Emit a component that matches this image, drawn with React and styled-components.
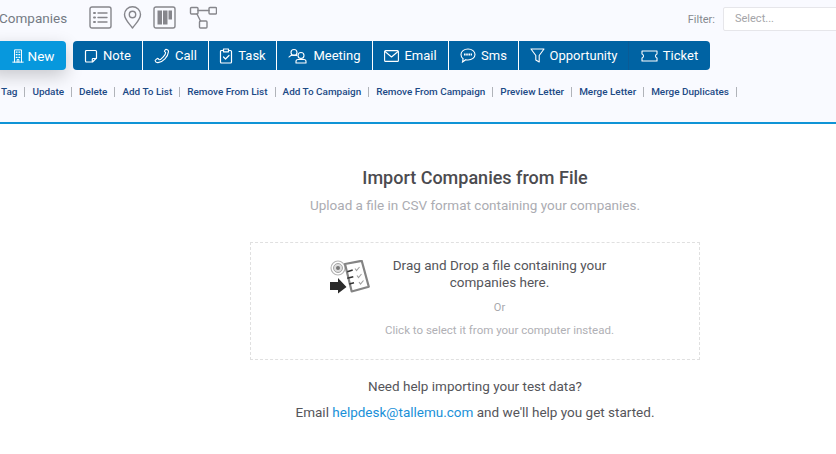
import React from "react";
import styled, { createGlobalStyle } from "styled-components";

const Global = createGlobalStyle`
  html, body { margin: 0; padding: 0; background: #fff; overflow: hidden; }
  body { font-family: Roboto, "Liberation Sans", sans-serif; }
  * { box-sizing: border-box; }
`;

const Header = styled.header`
  height: 124px;
  background: #f9faff;
  border-bottom: 2px solid #0f94d6;
  display: flex;
  flex-direction: column;
`;

const TopRow = styled.div`
  height: 41px;
  display: flex;
  align-items: flex-start;
`;

const PageTitle = styled.h1`
  margin: 10px 0 0 -1px;
  width: 90px;
  font-size: 13.5px;
  line-height: 17px;
  font-weight: 400;
  color: #757a84;
`;

const ViewIcons = styled.div`
  display: flex;
  align-items: flex-start;
  gap: 9px;
  padding-top: 6px;
  color: #86868c;
`;

const FilterBox = styled.div`
  margin-left: auto;
  display: flex;
  align-items: center;
  gap: 8px;
  padding-top: 7px;
  margin-right: -40px;
  font-size: 11px;
  color: #85898f;
`;

const SelectInput = styled.div`
  width: 153px;
  height: 24px;
  background: #fff;
  border: 1px solid #e6e6ea;
  border-radius: 2px;
  padding: 4px 11px;
  font-size: 11px;
  color: #a4a4a8;
`;

const ActionRow = styled.div`
  display: flex;
  height: 29px;
`;

const NewButton = styled.button`
  margin-left: -12px;
  width: 78px;
  height: 29px;
  border: 0;
  border-radius: 4px;
  background: #0798dd;
  color: #fff;
  font: 400 13.5px Roboto, sans-serif;
  display: flex;
  align-items: center;
  justify-content: center;
  padding: 0 0 0 11px;
  gap: 3px;
  box-shadow: 0 6px 18px rgba(0, 0, 0, 0.2);
`;

const ButtonGroup = styled.div`
  display: flex;
  margin-left: 7px;
  border-radius: 4px;
  overflow: hidden;
`;

const GroupButton = styled.button`
  width: ${(p) => p.$w}px;
  height: 29px;
  border: 0;
  border-right: 1px solid ${(p) => (p.$soft ? "#0a5b96" : "#fff")};
  background: #0063a3;
  color: #fff;
  font: 400 13px Roboto, sans-serif;
  display: flex;
  align-items: center;
  justify-content: center;
  gap: 5px;
  padding: 0;
  &:last-child { border-right: 0; }
`;

const LinkRow = styled.nav`
  display: flex;
  align-items: center;
  margin-top: 15px;
  padding-left: 1px;
  font-size: 9.95px;
  line-height: 14px;
  font-weight: 500;
  color: #1d4a86;
`;

const ActionLink = styled.span`
  white-space: nowrap;
`;

const Pipe = styled.span`
  width: 1px;
  height: 10px;
  margin: 0 7px;
  background: #b0b3b9;
`;

const Main = styled.main`
  width: 450px;
  margin-left: 250px;
  padding-top: 43px;
  text-align: center;
`;

const Title = styled.h2`
  margin: 0;
  font-size: 18px;
  line-height: 22px;
  font-weight: 500;
  color: #4b4b4f;
`;

const Subtitle = styled.p`
  margin: 6px 0 0;
  font-size: 13.5px;
  line-height: 20px;
  color: #abacb2;
`;

const DropZone = styled.div`
  margin-top: 27px;
  height: 118px;
  border: 1px dashed #e0e0e0;
  display: grid;
  grid-template-columns: 79px 40px 1fr;
  padding-top: 14px;
`;

const DropArt = styled.div`
  grid-column: 2;
  padding-top: 3px;
`;

const DropText = styled.div`
  grid-column: 3;
  padding-right: 82px;
  padding-left: 12px;
`;

const DropLead = styled.p`
  margin: 0;
  font-size: 13.5px;
  line-height: 17px;
  color: #55555a;
`;

const DropOr = styled.p`
  margin: 10px 0 0;
  font-size: 11px;
  line-height: 14px;
  color: #a8a8ad;
`;

const DropHint = styled.p`
  margin: 8px 0 0;
  font-size: 11.5px;
  line-height: 14px;
  color: #b0b0b5;
`;

const Help = styled.p`
  margin: ${(p) => p.$top}px 0 0;
  font-size: 13.5px;
  line-height: 18px;
  color: #55555a;
  a { color: #1a90d8; text-decoration: none; }
`;

const Line = ({ w, h, children, vb, sw = 1.2 }) => (
  <svg width={w} height={h} viewBox={vb} fill="none" stroke="currentColor" strokeWidth={sw} strokeLinecap="round" strokeLinejoin="round">
    {children}
  </svg>
);

const ListView = () => (
  <Line w={23} h={23} vb="0 0 23 23" sw={1.4}>
    <rect x="1" y="1" width="21" height="21" rx="2" />
    <path d="M9 7h9M9 11.500h9M9 16h9" />
    <path d="M5 7h1M5 11.500h1M5 16h1" strokeWidth="2" />
  </Line>
);

const PinView = () => (
  <Line w={23} h={23} vb="0 0 23 23" sw={1.4}>
    <path d="M11.500 22 C8 17 3.500 13.500 3.500 8.500 a8 7.800 0 0 1 16 0 C19.500 13.500 15 17 11.500 22z" />
    <circle cx="11.500" cy="8.500" r="3.200" />
  </Line>
);

const BoardView = () => (
  <Line w={23} h={23} vb="0 0 23 23" sw={1.4}>
    <rect x="1" y="1" width="21" height="21" rx="2" />
    <path d="M4.500 4.500h4.500v14H4.500zM10 4.500h4.500v14H10z" fill="currentColor" stroke="none" />
    <path d="M15.500 4.500h3.500v9h-3.500z" fill="currentColor" stroke="none" />
  </Line>
);

const FlowView = () => (
  <Line w={32} h={28} vb="0 0 32 28" sw={1.4}>
    <rect x="5.500" y="1.500" width="7.500" height="6.500" rx="1" />
    <rect x="24" y="1.500" width="7.500" height="6.500" rx="1" />
    <rect x="14.500" y="15" width="7.500" height="7" rx="1" />
    <path d="M13 4.500h11M12 8l3.500 7" />
  </Line>
);

const BuildingIcon = () => (
  <Line w={14} h={14} vb="0 0 14 16" sw={1.1}>
    <path d="M3 15V1h8v14M1 15h12M6 15v-3h2v3" />
    <path d="M5 3.500h1M8 3.500h1M5 6.500h1M8 6.500h1M5 9.500h1M8 9.500h1" strokeWidth="1.400" />
  </Line>
);

const NoteIcon = () => (
  <Line w={14} h={14} vb="0 0 14 14">
    <path d="M1.500 2.500a1 1 0 0 1 1-1h9a1 1 0 0 1 1 1v6.500l-4 4H2.500a1 1 0 0 1-1-1z" />
    <path d="M12 9.500H9a.7.7 0 0 0-.7.7V12.600" />
  </Line>
);

const PhoneIcon = () => (
  <Line w={16} h={16} vb="0 0 16 16" sw={1.1}>
    <path d="M12 1.200c1.200.2 2.600 1.300 2.500 2.400-.5 5-5.500 10.500-10.500 11-1.200.1-2.600-.7-2.900-2-.1-.5 2.200-2.200 2.700-2.200.6 0 1 1.300 1.600 1.300 1.800 0 6.400-5.300 6.200-7-.1-.6-1.200-1-1.200-1.500 0-.4 1.300-2 1.600-2z" />
  </Line>
);

const TaskIcon = () => (
  <Line w={14} h={16} vb="0 0 14 16">
    <rect x="1.500" y="2.500" width="11" height="12.500" rx="1" />
    <rect x="4.500" y="1" width="5" height="2.800" fill="#0063a3" />
    <path d="M4.500 9l2 2 3.500-3.500" />
  </Line>
);

const MeetingIcon = () => (
  <Line w={20} h={16} vb="0 0 20 16" sw={1.1}>
    <circle cx="6" cy="4.500" r="3" />
    <path d="M1 9c1-1.500 3-2 5-2 1 0 2 .2 2.800.6" />
    <circle cx="13" cy="7.500" r="3" />
    <path d="M8 15v-1.500c0-1 1-2 2-2h6c1 0 2 1 2 2V15z" />
  </Line>
);

const MailIcon = () => (
  <Line w={15} h={12} vb="0 0 15 12" sw={1.1}>
    <rect x="0.600" y="0.600" width="13.800" height="10.800" rx="1" />
    <path d="M1 1.500l6.500 5.500L14 1.500" />
  </Line>
);

const SmsIcon = () => (
  <svg width="16" height="15" viewBox="0 0 16 15" fill="none" stroke="currentColor" strokeWidth="1.100">
    <path d="M8 1c4 0 7 2.400 7 5.500S12 12 8 12c-.8 0-1.500-.1-2.200-.3L2.500 14l.6-3.200C1.800 9.800 1 8.300 1 6.500 1 3.400 4 1 8 1z" />
    <path d="M4 6.500h8" strokeWidth="2.200" strokeDasharray="1.600 .6" />
  </svg>
);

const FunnelIcon = () => (
  <Line w={15} h={15} vb="0 0 15 15" sw={1.1}>
    <path d="M1 1h13L9.200 7.500V14L5.800 12V7.500z" />
  </Line>
);

const TicketIcon = () => (
  <Line w={17} h={12} vb="0 0 17 12" sw={1.1}>
    <path d="M1 1h15v3c-1 .3-1.500 1-1.500 2s.5 1.700 1.500 2v3H1V8c1-.3 1.500-1 1.500-2S2 4.300 1 4z" />
  </Line>
);

const ImportArt = () => (
  <svg width="40" height="36" viewBox="0 0 40 36">
    <circle cx="8" cy="8" r="7" fill="#fff" stroke="#b5b5b5" strokeWidth="1.100" />
    <circle cx="8" cy="8" r="4.500" fill="#ddd" stroke="#a5a5a5" strokeWidth="1" />
    <circle cx="8" cy="8" r="2" fill="#777" />
    <polygon points="15,4 31.700,0.800 38.800,26.700 21.700,31.500" fill="#fff" stroke="#848484" strokeWidth="2.200" strokeLinejoin="round" />
    <path d="M17.300 11.700L22.700 10M17.300 18.300L23.300 16.700M19.300 24L24 22.700" stroke="#333" strokeWidth="1.500" />
    <path d="M25 8.500l1.500 2 3-3.500M27 15.500l1.500 2 3-3.500M29 22l1.500 2 3-3.500" stroke="#a0a0a0" strokeWidth="1.100" fill="none" />
    <path d="M0 22h8v-4l8.500 9-8.500 6.500v-3.500H0z" fill="#2b2b2b" />
  </svg>
);

const groupButtons = [
  { label: "Note", w: 70, icon: <NoteIcon /> },
  { label: "Call", w: 66, icon: <PhoneIcon /> },
  { label: "Task", w: 68, icon: <TaskIcon /> },
  { label: "Meeting", w: 96, icon: <MeetingIcon /> },
  { label: "Email", w: 76, icon: <MailIcon /> },
  { label: "Sms", w: 70, icon: <SmsIcon /> },
  { label: "Opportunity", w: 110, icon: <FunnelIcon />, soft: true },
  { label: "Ticket", w: 81, icon: <TicketIcon /> },
];

const links = [
  "Tag",
  "Update",
  "Delete",
  "Add To List",
  "Remove From List",
  "Add To Campaign",
  "Remove From Campaign",
  "Preview Letter",
  "Merge Letter",
  "Merge Duplicates",
];

export default function App() {
  return (
    <>
      <Global />
      <Header>
        <TopRow>
          <PageTitle>Companies</PageTitle>
          <ViewIcons>
            <ListView />
            <PinView />
            <BoardView />
            <FlowView />
          </ViewIcons>
          <FilterBox>
            <span>Filter:</span>
            <SelectInput>Select...</SelectInput>
          </FilterBox>
        </TopRow>
        <ActionRow>
          <NewButton>
            <BuildingIcon />
            New
          </NewButton>
          <ButtonGroup>
            {groupButtons.map((b) => (
              <GroupButton key={b.label} $w={b.w} $soft={b.soft}>
                {b.icon}
                {b.label}
              </GroupButton>
            ))}
          </ButtonGroup>
        </ActionRow>
        <LinkRow>
          {links.map((l) => (
            <React.Fragment key={l}>
              <ActionLink>{l}</ActionLink>
              <Pipe />
            </React.Fragment>
          ))}
        </LinkRow>
      </Header>
      <Main>
        <Title>Import Companies from File</Title>
        <Subtitle>Upload a file in CSV format containing your companies.</Subtitle>
        <DropZone>
          <DropArt>
            <ImportArt />
          </DropArt>
          <DropText>
            <DropLead>Drag and Drop a file containing your companies here.</DropLead>
            <DropOr>Or</DropOr>
            <DropHint>Click to select it from your computer instead.</DropHint>
          </DropText>
        </DropZone>
        <Help $top={17}>Need help importing your test data?</Help>
        <Help $top={8}>
          Email <a href="#help">helpdesk@tallemu.com</a> and we'll help you get started.
        </Help>
      </Main>
    </>
  );
}
